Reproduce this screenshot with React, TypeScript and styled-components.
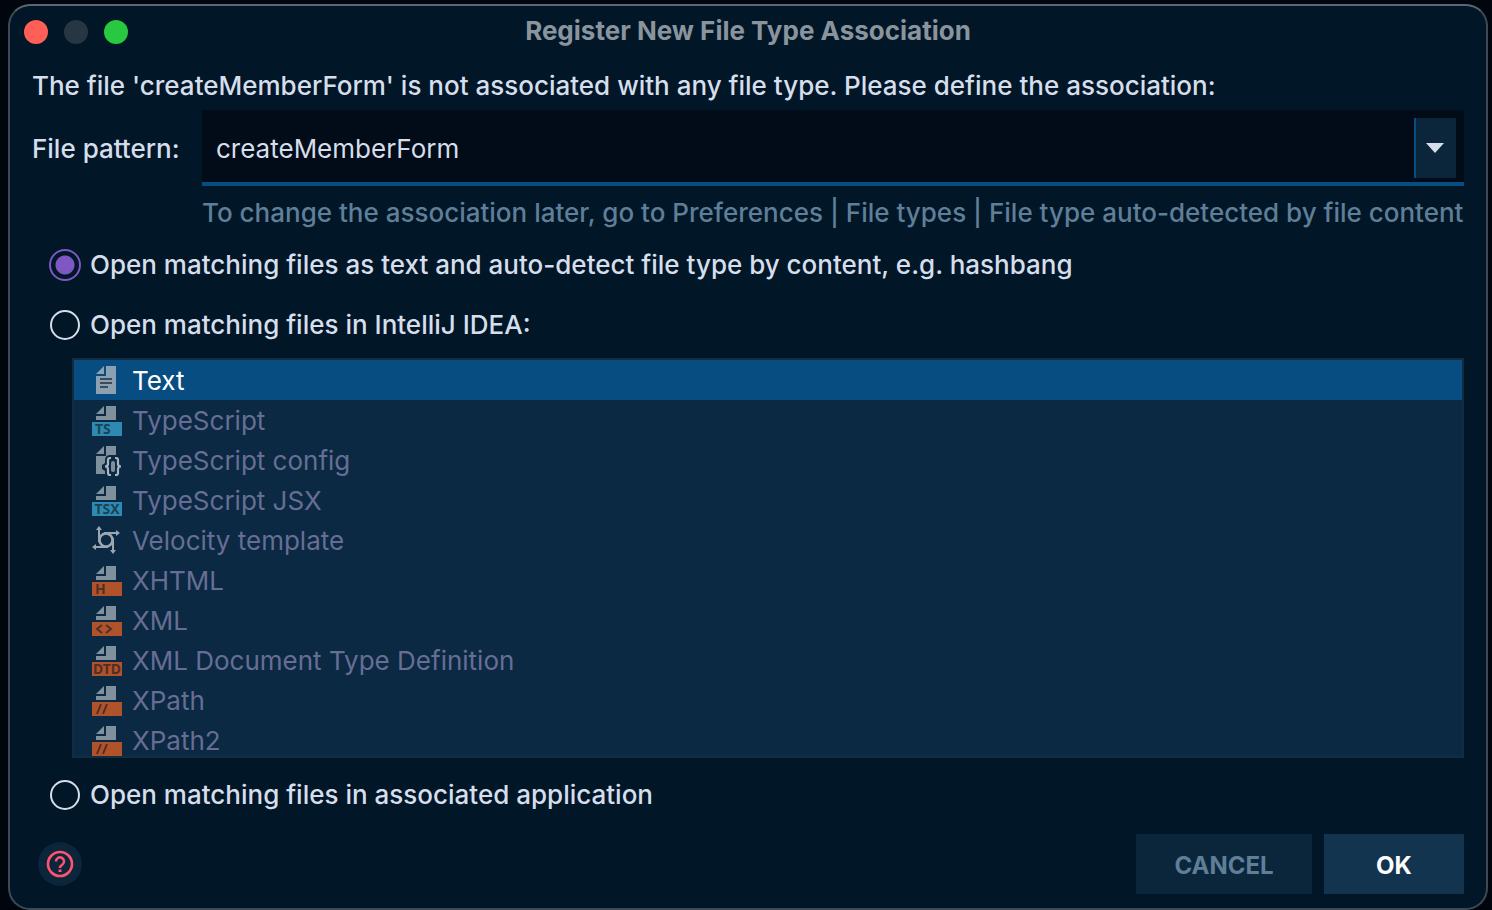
import React, { useState } from "react";
import styled, { createGlobalStyle, css } from "styled-components";

const GlobalStyle = createGlobalStyle`
  *, *::before, *::after { box-sizing: border-box; }
  body {
    margin: 0;
    background: #01060e;
    color: #d6deeb;
    font: 400 26px/32px Inter, "Liberation Sans", sans-serif;
  }
  button, input { font: inherit; color: inherit; }
`;

const Desktop = styled.div`
  display: flex;
  min-height: 100vh;
  padding: 4px 4px 0 8px;
`;

const Dialog = styled.main`
  display: flex;
  flex: 1;
  flex-direction: column;
  min-width: 0;
  padding: 0 22px 14px;
  border: 2px solid #3d4a55;
  border-top-color: #5a6670;
  border-radius: 22px;
  background: #011627;
`;

const TitleBar = styled.header`
  display: grid;
  grid-template-columns: 1fr auto 1fr;
  align-items: center;
  height: 52px;
  margin: 0 -8px;
`;

const Lights = styled.div`
  display: flex;
  gap: 16px;
`;

const Light = styled.button<{ $color: string }>`
  width: 24px;
  height: 24px;
  padding: 0;
  border: 0;
  border-radius: 50%;
  background: ${(p) => p.$color};
`;

const Title = styled.h1`
  margin: 0;
  padding-bottom: 2px;
  font-size: 26px;
  line-height: 32px;
  font-weight: 700;
  color: #8a949d;
`;

const Message = styled.p`
  margin: 12px 0 8px;
  font-weight: 500;
  white-space: nowrap;
`;

const PatternGrid = styled.div`
  display: grid;
  grid-template-columns: 148px 1fr;
  column-gap: 22px;
  align-items: center;
`;

const PatternLabel = styled.label`
  padding-top: 2px;
  font-weight: 500;
  white-space: nowrap;
`;

const Combo = styled.div`
  display: flex;
  height: 76px;
  padding: 8px 8px 4px 14px;
  border-bottom: 4px solid #084d81;
  background: #010c18;
`;

const PatternInput = styled.input`
  flex: 1;
  min-width: 0;
  padding: 2px 0 0;
  border: 0;
  outline: 0;
  background: transparent;
`;

const DropButton = styled.button`
  display: flex;
  align-items: center;
  justify-content: center;
  width: 42px;
  padding: 0 2px 0 0;
  border: 0;
  border-left: 2px solid #084d81;
  background: #0b253a;
`;

const Hint = styled.p`
  grid-column: 2;
  margin: 11px 0 0;
  color: #5f7e97;
  font-weight: 450;
  white-space: nowrap;
`;

const Choices = styled.form`
  display: flex;
  flex-direction: column;
  padding: 6px 0 0 16px;
`;

const Choice = styled.label`
  display: flex;
  align-items: center;
  gap: 8px;
  height: 60px;
  font-weight: 500;
`;

const Radio = styled.input`
  appearance: none;
  flex: none;
  display: grid;
  place-items: center;
  width: 34px;
  height: 34px;
  margin: 0;
  border: 1px solid transparent;
  border-radius: 50%;

  &::before {
    content: "";
    width: 30px;
    height: 30px;
    border: 2px solid #d6deeb;
    border-radius: 50%;
  }
  &:checked::before {
    width: 32px;
    height: 32px;
    border-color: #7e57c2;
    background: radial-gradient(circle, #7e57c2 9px, transparent 10px);
  }
`;

const TypeList = styled.ul`
  height: 400px;
  margin: 3px 0 7px 24px;
  padding: 0;
  overflow: auto;
  scrollbar-width: none;
  border: 2px solid #122d42;
  background: #0b2942;
  list-style: none;
`;

const TypeRow = styled.li<{ $selected: boolean }>`
  display: flex;
  align-items: center;
  gap: 10px;
  height: 40px;
  padding-left: 16px;
  color: #676e95;
  ${(p) =>
    p.$selected &&
    css`
      background: #084d81;
      color: #ffffff;
    `}
`;

const TypeName = styled.span`
  padding-top: 2px;
`;

const IconSvg = styled.svg`
  flex: none;
  overflow: visible;
`;

const Footer = styled.footer`
  display: flex;
  align-items: center;
  gap: 12px;
  margin-top: auto;
  padding-left: 6px;
`;

const HelpButton = styled.button`
  display: grid;
  place-items: center;
  width: 44px;
  height: 44px;
  margin-right: auto;
  padding: 0;
  border: 0;
  border-radius: 50%;
  background: #0b253a;
`;

const ActionButton = styled.button<{ $primary?: boolean }>`
  min-width: ${(p) => (p.$primary ? 140 : 176)}px;
  height: 60px;
  padding: 4px 0 0;
  border: 0;
  font-size: 24px;
  font-weight: 700;
  background: ${(p) => (p.$primary ? "#13344f" : "#0b253a")};
  color: ${(p) => (p.$primary ? "#ffffff" : "#5f7e97")};
`;

type IconKind = "text" | "config" | "velocity" | "tag";

interface FileType {
  name: string;
  icon: IconKind;
  tag?: string;
  tagColor?: string;
}

const BLUE = "#2d8bb3";
const ORANGE = "#b0532b";

const fileTypes: FileType[] = [
  { name: "Text", icon: "text" },
  { name: "TypeScript", icon: "tag", tag: "TS", tagColor: BLUE },
  { name: "TypeScript config", icon: "config" },
  { name: "TypeScript JSX", icon: "tag", tag: "TSX", tagColor: BLUE },
  { name: "Velocity template", icon: "velocity" },
  { name: "XHTML", icon: "tag", tag: "H", tagColor: ORANGE },
  { name: "XML", icon: "tag", tag: "<>", tagColor: ORANGE },
  { name: "XML Document Type Definition", icon: "tag", tag: "DTD", tagColor: ORANGE },
  { name: "XPath", icon: "tag", tag: "//", tagColor: ORANGE },
  { name: "XPath2", icon: "tag", tag: "//", tagColor: ORANGE },
];

function TagMark({ tag, color }: { tag: string; color: string }) {
  const ink = color === BLUE ? "#1b4256" : "#522d26";
  if (tag === "<>") {
    return <path d="M12 21 L7 25 L12 29 M16 21 L21 25 L16 29" stroke={ink} strokeWidth="2" fill="none" />;
  }
  if (tag === "//") {
    return <path d="M11 20 L7 30 M17 20 L13 30" stroke={ink} strokeWidth="2" fill="none" />;
  }
  return (
    <text
      x={tag.length === 3 ? 17 : 5}
      y="30"
      textAnchor={tag.length === 3 ? "middle" : "start"}
      fontFamily='"Noto Sans", "Open Sans", sans-serif'
      fontWeight="700"
      fontSize="14"
      fill={ink}
    >
      {tag}
    </text>
  );
}

function FileIcon({ type }: { type: FileType }) {
  const page = type.icon === "text" ? "#8ba0b1" : "#80919e";
  return (
    <IconSvg width="32" height="32" viewBox="0 0 32 32" aria-hidden="true">
      {type.icon === "text" && (
        <>
          <path d="M14 2 V10 H6 Z M16 2 H26 V30 H6 V12 H16 Z" fill={page} />
          <path d="M10 14 H22 V16 H10 Z M10 18 H22 V20 H10 Z M10 22 H18 V24 H10 Z" fill="#3c4b57" />
        </>
      )}
      {type.icon === "tag" && (
        <>
          <path d="M14 2 V10 H6 Z M16 2 H26 V16 H6 V12 H16 Z" fill={page} />
          <path d="M2 18 H32 V32 H2 Z" fill={type.tagColor} />
          <TagMark tag={type.tag ?? ""} color={type.tagColor ?? BLUE} />
        </>
      )}
      {type.icon === "config" && (
        <>
          <path d="M14 2 V10 H6 Z M16 2 H26 V11 H20 C16 11 15 14 15 17 V19 L12 21 V25 L15 27 V30 H6 V12 H16 Z" fill={page} />
          <path
            d="M21 14 H20 Q18 14 18 16 V20 Q18 22.500 15 22.500 Q18 22.500 18 25 V29 Q18 31 20 31 H21 M25 14 H26 Q28 14 28 16 V20 Q28 22.500 31 22.500 Q28 22.500 28 25 V29 Q28 31 26 31 H25"
            fill="none"
            stroke="#a9b6bf"
            strokeWidth="2.200"
          />
          <rect x="21" y="17" width="4" height="11" rx="2" fill={page} />
        </>
      )}
      {type.icon === "velocity" && (
        <>
          <g fill="none" stroke="#9aa7b0" strokeWidth="2">
            <circle cx="16" cy="16" r="6.500" strokeWidth="2.600" />
            <path d="M9 18 V5 M14 9 H27 M23 14 V27 M18 23 H5" />
          </g>
          <path
            d="M9 2 L12 6 H6 Z M30 9 L26 6 V12 Z M23 30 L20 26 H26 Z M2 23 L6 20 V26 Z"
            fill="#9aa7b0"
          />
        </>
      )}
    </IconSvg>
  );
}

export default function App() {
  const [pattern, setPattern] = useState("createMemberForm");
  const [mode, setMode] = useState("detect");
  const [selected, setSelected] = useState("Text");

  const choice = (value: string, label: string) => (
    <Choice>
      <Radio type="radio" name="mode" value={value} checked={mode === value} onChange={() => setMode(value)} />
      {label}
    </Choice>
  );

  return (
    <>
      <GlobalStyle />
      <Desktop>
        <Dialog>
          <TitleBar>
            <Lights>
              <Light type="button" aria-label="Close" $color="#ff5f57" />
              <Light type="button" aria-label="Minimize" $color="#263643" />
              <Light type="button" aria-label="Zoom" $color="#28c840" />
            </Lights>
            <Title>Register New File Type Association</Title>
          </TitleBar>
          <Message>
            The file 'createMemberForm' is not associated with any file type. Please define the association:
          </Message>
          <PatternGrid>
            <PatternLabel htmlFor="pattern">File pattern:</PatternLabel>
            <Combo>
              <PatternInput id="pattern" value={pattern} onChange={(e) => setPattern(e.target.value)} />
              <DropButton type="button" aria-label="Show patterns">
                <svg width="18" height="10" viewBox="0 0 18 10" aria-hidden="true">
                  <path d="M0 0 H18 L9 10 Z" fill="#d6deeb" />
                </svg>
              </DropButton>
            </Combo>
            <Hint>To change the association later, go to Preferences | File types | File type auto-detected by file content</Hint>
          </PatternGrid>
          <Choices>
            {choice("detect", "Open matching files as text and auto-detect file type by content, e.g. hashbang")}
            {choice("ide", "Open matching files in IntelliJ IDEA:")}
            <TypeList role="listbox" aria-label="File types">
              {fileTypes.map((type) => (
                <TypeRow
                  key={type.name}
                  role="option"
                  aria-selected={selected === type.name}
                  $selected={selected === type.name}
                  onClick={() => setSelected(type.name)}
                >
                  <FileIcon type={type} />
                  <TypeName>{type.name}</TypeName>
                </TypeRow>
              ))}
            </TypeList>
            {choice("external", "Open matching files in associated application")}
          </Choices>
          <Footer>
            <HelpButton type="button" aria-label="Help">
              <svg width="28" height="28" viewBox="0 0 28 28" fill="none" stroke="#ff5370" strokeWidth="3" aria-hidden="true">
                <circle cx="14" cy="14" r="12" strokeWidth="2.600" />
                <path d="M10 11.500 A4 4 0 1 1 16.500 14.500 Q14 16 14 18" strokeWidth="2.500" />
                <path d="M14 19.500 V22" />
              </svg>
            </HelpButton>
            <ActionButton type="button">CANCEL</ActionButton>
            <ActionButton type="button" $primary>OK</ActionButton>
          </Footer>
        </Dialog>
      </Desktop>
    </>
  );
}
